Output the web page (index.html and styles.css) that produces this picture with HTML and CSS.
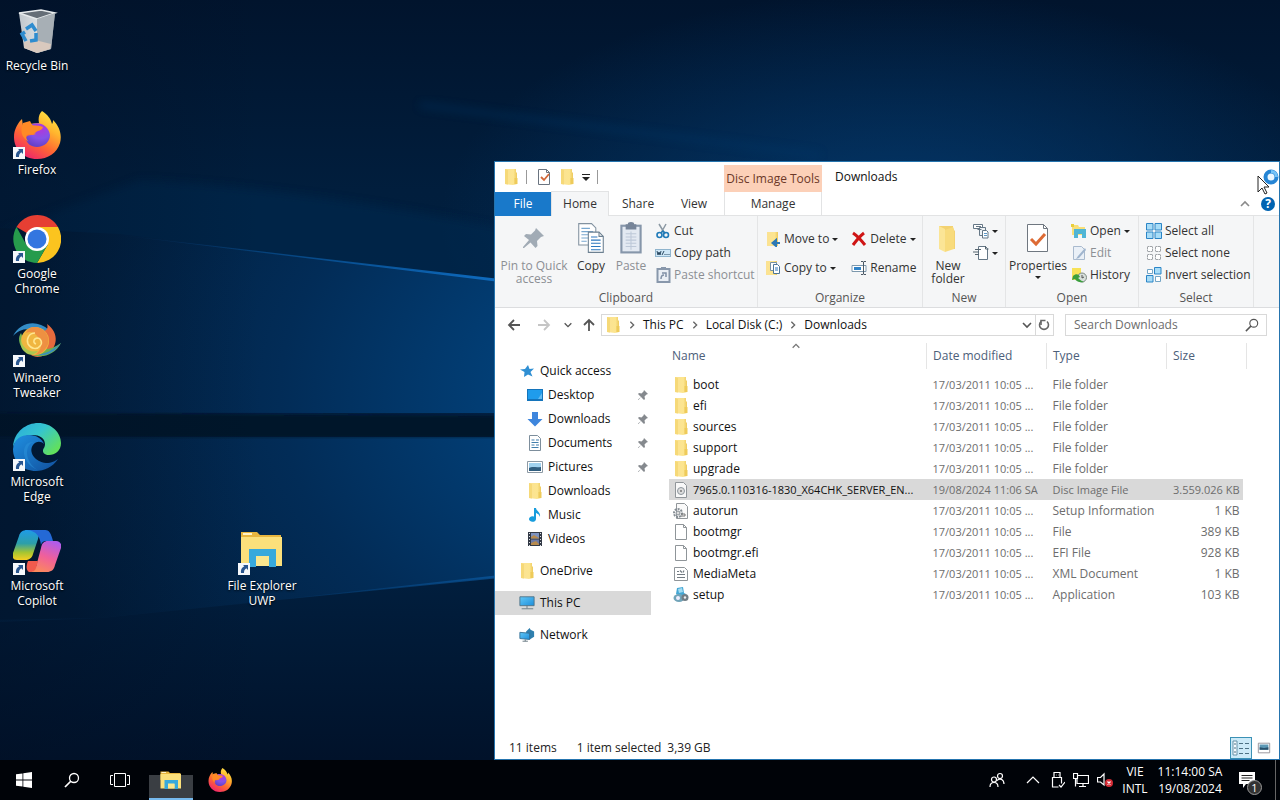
FILE: index.html
```html
<!DOCTYPE html>
<html lang="en">
<head>
<meta charset="utf-8">
<meta name="viewport" content="width=device-width, initial-scale=1">
<title>Downloads</title>
<link rel="stylesheet" href="styles.css">
</head>
<body>
<svg class="defs" aria-hidden="true">
  <defs>
    <linearGradient id="gFolder" x1="0" y1="0" x2="1" y2="0"><stop offset="0" stop-color="#fbe293"/><stop offset=".7" stop-color="#fce58f"/><stop offset="1" stop-color="#edc95c"/></linearGradient>
    <linearGradient id="gFox" x1=".9" y1="0" x2=".3" y2="1"><stop offset="0" stop-color="#fff04a"/><stop offset=".35" stop-color="#ffb52e"/><stop offset=".65" stop-color="#ff6a32"/><stop offset="1" stop-color="#f0246b"/></linearGradient>
    <radialGradient id="gFoxIn" cx=".6" cy=".2" r=".9"><stop offset="0" stop-color="#b833d8"/><stop offset=".5" stop-color="#8552e8"/><stop offset="1" stop-color="#5b3cc0"/></radialGradient>
    <linearGradient id="gEdge" x1="0" y1="0" x2="1" y2=".7"><stop offset="0" stop-color="#2aa8dc"/><stop offset=".5" stop-color="#35c5cf"/><stop offset="1" stop-color="#62e05c"/></linearGradient>
    <linearGradient id="gEdge2" x1="0" y1="0" x2="1" y2="1"><stop offset="0" stop-color="#1f8fe0"/><stop offset="1" stop-color="#114f9c"/></linearGradient>
    <linearGradient id="gCop1" x1="0" y1="0" x2="0" y2="1"><stop offset="0" stop-color="#1f9be8"/><stop offset=".45" stop-color="#2d9fa8"/><stop offset=".75" stop-color="#a6c531"/><stop offset="1" stop-color="#f6ce22"/></linearGradient>
    <linearGradient id="gCop2" x1=".7" y1="0" x2=".3" y2="1"><stop offset="0" stop-color="#b05ceb"/><stop offset=".5" stop-color="#f0609a"/><stop offset="1" stop-color="#fb8a5b"/></linearGradient>
    <linearGradient id="gBin" x1="0" y1="0" x2="1" y2="0"><stop offset="0" stop-color="#bfc6cc"/><stop offset=".5" stop-color="#d9dde0"/><stop offset="1" stop-color="#8f979e"/></linearGradient>
    <linearGradient id="gScreen" x1="0" y1="0" x2="1" y2="1"><stop offset="0" stop-color="#62c8f7"/><stop offset="1" stop-color="#1d8edb"/></linearGradient>
  </defs>

  <symbol id="folder" viewBox="0 0 16 16"><path d="M2 0h11v3l1 1v11l-4 1-8-1z" fill="url(#gFolder)"/><path d="M2 0l3 1v14.500L2 15z" fill="#f6d978"/><path d="M11.500 9h3v6h-3z" fill="#eecb5a"/></symbol>
  <symbol id="bigfolder" viewBox="0 0 24 32"><path d="M3 4h14v3l2 2v18H3z" fill="#f3d271"/><path d="M3 4l6 3v23l-6-3z" fill="#fbe596"/><path d="M9 8l8-3 1 2v20l-9 3z" fill="#f8db7c"/></symbol>
  <symbol id="tick" viewBox="0 0 16 16"><path d="M2.500.500h8l3 3v12h-11z" fill="#fff" stroke="#6a7480"/><path d="M10.500.500v3h3" fill="none" stroke="#6a7480"/><path d="M5 8l3 3 5-6" fill="none" stroke="#d2683a" stroke-width="1.800"/></symbol>
  <symbol id="bigtick" viewBox="0 0 24 32"><path d="M1.500 2.500h16l4 4v23h-20z" fill="#fff" stroke="#6f7780"/><path d="M17.500 2.500v4h4" fill="none" stroke="#6f7780"/><path d="M5 17l5 5 9-10" fill="none" stroke="#dd6b35" stroke-width="3"/></symbol>
  <symbol id="bigpin" viewBox="0 0 24 24"><path d="M14 2l8 8-3 1-4 4 .500 5-2 2-5-5.500L2 22l-1 0v-1l6-7-5-4 2-2 5 .500 4-4z" fill="#a1abb5"/></symbol>
  <symbol id="pin" viewBox="0 0 12 12"><path d="M7 1l4 4-1.500.500-2 2 .500 2.500-1 1-3-3-2.500 3L1 10.500l3-2.500-3-3L2 4l2.500.500 2-2z" fill="#85898e"/></symbol>
  <symbol id="copy" viewBox="0 0 26 30"><path d="M1.500 1.500h12l4 4v16h-16z" fill="#fff" stroke="#8292a0"/><path d="M4 6h8M4 9h11M4 12h11M4 15h11M4 18h5" stroke="#78a7cf"/><path d="M10.500 9.500h10l4 4v15h-14z" fill="#fff" stroke="#6c8091"/><path d="M20.500 9.500v4h4" fill="none" stroke="#6c8091"/><path d="M13 14h6M13 17h9M13 20h9M13 23h9M13 26h9" stroke="#2d77bd"/></symbol>
  <symbol id="paste" viewBox="0 0 24 30"><rect x="3" y="3.500" width="18" height="25" fill="#e3e9f2" stroke="#8696aa" stroke-width="2"/><path d="M7 2h2a3 2 0 0 1 6 0h2v5H7z" fill="#778599"/><path d="M7 11h10M7 14h10M7 17h10M7 20h10M7 23h10M12 9v17" stroke="#bdc8d8"/></symbol>
  <symbol id="cut" viewBox="0 0 16 16"><path d="M4 1l6 10M11 1L6 10" stroke="#8b98a3" stroke-width="1.500"/><circle cx="4.500" cy="12" r="2.500" fill="none" stroke="#1f7ab8" stroke-width="1.600"/><circle cx="11" cy="12" r="2.500" fill="none" stroke="#1f7ab8" stroke-width="1.600"/><path d="M6 10l2-2 2 2" fill="none" stroke="#1f7ab8" stroke-width="1.500"/></symbol>
  <symbol id="path" viewBox="0 0 16 16"><rect x=".500" y="4.500" width="15" height="7" fill="#cfe7f7" stroke="#8fb4cd"/><path d="M2 6l1 4 1-3 1 3 1-4M7 10l2-4M9.500 9.500h1M11.500 9.500h1M13.500 9.500h1" fill="none" stroke="#29475f"/></symbol>
  <symbol id="shortcutpaste" viewBox="0 0 16 16"><rect x="2.500" y="2" width="12" height="13" fill="#e9eef5" stroke="#8897ab" stroke-width="2"/><path d="M6 0h5v3H6z" fill="#8897ab"/><path d="M6 12c0-3 1-4 3-4M7 6h4v4" fill="none" stroke="#7f8fa5" stroke-width="1.500"/></symbol>
  <symbol id="moveto" viewBox="0 0 16 16"><path d="M2 1h11v14H2z" fill="url(#gFolder)"/><path d="M15 12H9M11 9l-3.500 3 3.500 3z" fill="#2c78b5" stroke="#2c78b5" stroke-width="2"/></symbol>
  <symbol id="copyto" viewBox="0 0 16 16"><path d="M1 1h11v14H1z" fill="url(#gFolder)"/><path d="M5.500 2.500h6v8h-6z" fill="#fff" stroke="#7590a5"/><path d="M8.500 4.500h4l2 2v7h-6z" fill="#fff" stroke="#4c7598"/><path d="M10 8h3M10 10h3" stroke="#2d77bd"/></symbol>
  <symbol id="delete" viewBox="0 0 16 16"><path d="M2 2c3 2 8 7 12 12M13 2C9 5 5 10 2 14" fill="none" stroke="#cf1515" stroke-width="3"/></symbol>
  <symbol id="rename" viewBox="0 0 16 16"><path d="M1 5.500h14v6H1z" fill="#fff" stroke="#7c98ad"/><path d="M3 7h7v3H3z" fill="#2f83c8"/><path d="M10 1.500h2l.500 1 .500-1h2M12.500 2v12M10 14.500h2l.500-1 .500 1h2" fill="none" stroke="#4b5965"/></symbol>
  <symbol id="newitem" viewBox="0 0 16 16"><path d="M.500 1.500h9v4h-9zM3 3.500h5" fill="#fff" stroke="#657786"/><path d="M4.500 6.500h4M6.500 4.500h6v8h-6z" fill="#eef2f5" stroke="#657786"/><path d="M9.500 7.500h4l1.500 1.500v6H9.500z" fill="#fff" stroke="#657786"/><path d="M11 10.500h3M11 12.500h3" stroke="#5d97c5"/></symbol>
  <symbol id="easy" viewBox="0 0 16 16"><path d="M5.500 1.500h7l2 2v11h-9z" fill="#fff" stroke="#657786"/><path d="M12.500 1v3h3M2 4.500h6M0 7h6M2 9.500h4" fill="none" stroke="#55646f"/></symbol>
  <symbol id="open" viewBox="0 0 16 16"><path d="M1 2h6l1 2h6v8H1z" fill="#f8df78"/><path d="M3 6h12v9h-4v-4H7v4H3z" fill="#50b5d5"/><path d="M0 1h3v3H0zM4 1h3M1 6v6" fill="#e9cf3c"/></symbol>
  <symbol id="edit" viewBox="0 0 16 16"><path d="M2.500 1.500h8l3 3v10h-11z" fill="#eaf0f7" stroke="#a9bace"/><path d="M14 3l-7 8-2 3 3-1 7-8z" fill="#a0b5ce"/></symbol>
  <symbol id="history" viewBox="0 0 16 16"><path d="M1 1h9v12H1z" fill="#f7e258"/><circle cx="11" cy="10.500" r="4.500" fill="#d8e0dc" stroke="#7c8982"/><path d="M11 8v3l2-1" fill="none" stroke="#555"/><path d="M2 9c3-3 6-2 7 1l-2 1c2 2 4 3 6 4-5 1-8-1-9-3l-3 1z" fill="#3b9f3d"/></symbol>
  <symbol id="selall" viewBox="0 0 16 16"><path d="M.500.500h6.500v6.500H.500zM9 .500h6.500v6.500H9zM.500 9h6.500v6.500H.500zM9 9h6.500v6.500H9z" fill="#a7dcf7" stroke="#2b85c6"/></symbol>
  <symbol id="selnone" viewBox="0 0 16 16"><path d="M1.500 1.500h5v5h-5zM9.500 1.500h5v5h-5zM1.500 9.500h5v5h-5zM9.500 9.500h5v5h-5z" fill="#fff" stroke="#a0a4a8" stroke-dasharray="2 .500"/></symbol>
  <symbol id="selinv" viewBox="0 0 16 16"><path d="M8.500.500h6.500v6.500H8.500zM.500 8.500h6.500v6.500H.500z" fill="#a7dcf7" stroke="#2b85c6"/><path d="M1.500 2.500h5v4h-5zM9.500 9.500h5v5h-5z" fill="#fff" stroke="#72a5c6"/></symbol>
  <symbol id="star" viewBox="0 0 16 16"><path d="M9 2l1.500 4 4.500-.500-3.500 3.500 2 4.500-4.500-2-4 2.500.500-5L1 6.500l5-.500z" fill="#2f8fd3"/></symbol>
  <symbol id="desk" viewBox="0 0 16 16"><path d="M0 2h16v12H0z" fill="#1474bb"/><path d="M1 3h14v9H1z" fill="#1f9cec"/><path d="M11 12l4-6v6z" fill="#65bcf2"/></symbol>
  <symbol id="down" viewBox="0 0 16 16"><path d="M5 1h6v7h4.500L8 15.500.500 8H5z" fill="#3e86dd"/></symbol>
  <symbol id="doc" viewBox="0 0 16 16"><path d="M2.500.500h8l3 3v12h-11z" fill="#fff" stroke="#7d8e9c"/><path d="M4.500 5h3M9 5h3M4.500 7.500h7M4.500 10h3M9 10h3M4.500 12.500h7" stroke="#427fac"/></symbol>
  <symbol id="pic" viewBox="0 0 16 16"><path d="M.500 2.500h15v11H.500z" fill="#fff" stroke="#8d9aa5"/><path d="M2 4h12v8H2z" fill="#a1d2ef"/><path d="M2 9c4-2 6 0 12-1v4H2z" fill="#315e7f"/></symbol>
  <symbol id="music" viewBox="0 0 16 16"><path d="M7 1h2c0 3 5 4 4 9-1-3-2-3-4-4v6a3.500 2.800 0 1 1-2-2.500z" fill="#189ddd"/></symbol>
  <symbol id="video" viewBox="0 0 16 16"><path d="M1 1h14v14H1z" fill="#333a46"/><path d="M4 2h8v5.500H4z" fill="#7e93bf"/><path d="M4 8.500h8V14H4z" fill="#6d7aa5"/><path d="M4 6l3-2 5 3v.500H4zM4 12l5-2 3 3v1H4z" fill="#b88b4e"/><path d="M2.500 2v13M13.500 2v13" stroke="#dce0e6" stroke-dasharray="1 2"/></symbol>
  <symbol id="pc" viewBox="0 0 18 16"><path d="M1 1h16v10H1z" fill="url(#gScreen)" stroke="#4e7185"/><path d="M9 11v3M3 14.500h13" stroke="#62757f"/></symbol>
  <symbol id="net" viewBox="0 0 18 16"><path d="M8 4l4-4 1 2 4 2v6l-5 3-4-2z" fill="#2f7fae"/><path d="M1 5l11 1v7l-11-1z" fill="url(#gScreen)" stroke="#326e93"/><path d="M7 13v2M4 15h6" stroke="#60727c"/></symbol>
  <symbol id="disc" viewBox="0 0 16 16"><path d="M2.500.500h8l3 3v12h-11z" fill="#f8f8f8" stroke="#91969a"/><circle cx="8" cy="9" r="3.500" fill="#ddd" stroke="#8e979e"/><circle cx="8" cy="9" r="1" fill="#777"/></symbol>
  <symbol id="inf" viewBox="0 0 16 16"><path d="M3.500.500h8l3 3v12h-11z" fill="#fafafa" stroke="#91969a"/><circle cx="5" cy="10" r="4" fill="none" stroke="#858d94" stroke-width="2" stroke-dasharray="2 1"/><circle cx="5" cy="10" r="2" fill="#ddd" stroke="#858d94"/><path d="M8 11h4v2H8" fill="none" stroke="#777"/></symbol>
  <symbol id="file" viewBox="0 0 16 16"><path d="M2.500.500h8l3 3v12h-11z" fill="#fff" stroke="#8f9599"/><path d="M10.500.500v3h3" fill="none" stroke="#8f9599"/></symbol>
  <symbol id="xml" viewBox="0 0 16 16"><path d="M1.500 1.500h10l3 3v10h-13z" fill="#fff" stroke="#8f9599"/><path d="M4 5.500h2M7 4.500l2 2M11 4.500l-1 2M4 8.500h8M4 11.500h8" stroke="#727b82" stroke-width="1.200"/></symbol>
  <symbol id="setup" viewBox="0 0 16 16"><path d="M4 1l6-1 1 6 2 1-4 3-6-3z" fill="#43a7d5"/><path d="M5 2l4-1 1 4-4 1z" fill="#a5dcf2"/><ellipse cx="6" cy="11" rx="5.500" ry="4" fill="#71a4b9"/><circle cx="5" cy="11" r="2" fill="#eef"/><circle cx="12" cy="10.500" r="3.500" fill="#727e86"/><circle cx="12" cy="10.500" r="1.200" fill="#eee"/></symbol>
  <symbol id="back" viewBox="0 0 16 16"><path d="M14 8H3M8 3L3 8l5 5" fill="none" stroke="currentColor" stroke-width="1.800"/></symbol>
  <symbol id="chev" viewBox="0 0 12 12"><path d="M2 4l4 4 4-4" fill="none" stroke="currentColor" stroke-width="1.600"/></symbol>
  <symbol id="search" viewBox="0 0 16 16"><circle cx="10" cy="6" r="4.500" fill="none" stroke="currentColor" stroke-width="1.300"/><path d="M7 9L1 15" stroke="currentColor" stroke-width="1.700"/></symbol>
  <symbol id="refresh" viewBox="0 0 16 16"><path d="M5 4.500a4.500 4.500 0 1 0 6 0" fill="none" stroke="#666" stroke-width="1.600"/><path d="M5 8V3.500H9.500" fill="none" stroke="#666" stroke-width="1.600"/></symbol>
  <symbol id="shortcut" viewBox="0 0 12 12"><path d="M0 0h12v12H0z" fill="#f5f8fb"/><path d="M5 2h5v5L8.300 5.300C6.500 6.500 6 8 6 10H3c-.500-3 .500-5 3.300-6.700z" fill="#29568f"/></symbol>

  <symbol id="firefox" viewBox="0 0 48 48"><path d="M29 0c6 4 9 8 10 13 1-1 1-3 1-4 7 7 9 15 7 23-3 10-12 16-23 16C10 48 1 38 1 26c0-7 3-12 6-16l2-2 1 7c2-2 4-2 6-2 3 0 6-1 10-1-1-5 0-9 3-12z" fill="url(#gFox)"/><path d="M19 13c8-3 17 2 18 11 0 7-6 12-13 12-6 0-11-4-11-9 1-4 6-2 10-4l-5-2z" fill="url(#gFoxIn)"/><path d="M10 12l7-2 2 4c3 1 7 0 11 2-1 4-5 3-8 6-2 2-6 1-8 2-2 2 0 5 2 7-8-5-9-11-6-19z" fill="#ff8a26"/></symbol>
  <symbol id="chrome" viewBox="0 0 48 48"><path d="M24 24L3.500 12A24 24 0 0 1 45 12z" fill="#e63f33"/><path d="M24 12h21a24 24 0 0 1-21 36l10.500-18z" fill="#fbc41f"/><path d="M3.500 12A24 24 0 0 0 24 48l10.500-18H13.500z" fill="#269b4c"/><circle cx="24" cy="24" r="12" fill="#fff"/><circle cx="24" cy="24" r="9.500" fill="#3376e0"/></symbol>
  <symbol id="winaero" viewBox="0 0 48 48"><path d="M0 17C7 3 24 0 36 11c4 4 4 8 2 12-7-10-14-14-22-13C8 10 4 13 0 17z" fill="#348cc5"/><path d="M34 5c13 9 11 25-2 31-6 3-11 2-14 0 12-3 16-13 9-25 5 2 9 0 7-6z" fill="#e66a3d"/><path d="M48 24c-7 14-25 18-37 7-6-6-6-13-3-17 3 9 11 15 20 16 8 1 14-2 20-6z" fill="#6caf50"/><path d="M48 24c-6 9-14 13-23 12 9-2 15-5 23-12z" fill="#398dc0"/><circle cx="22" cy="22" r="14" fill="#f0b640"/><path d="M21 8c10 0 16 8 14 17-2 6-7 10-13 11 7-5 8-13 3-18-4-5-8-6-12-4 2-4 4-6 8-6z" fill="#ee9042"/><path d="M8 20c1 9 8 14 17 12-3 4-9 5-13 1-4-3-5-8-4-13z" fill="#a9c752"/><path d="M22 14c-6 0-9 6-7 11 3 5 9 6 12 2 3-3 1-8-3-8-4 1-4 5-1 6" fill="none" stroke="#ffe690" stroke-width="1.500"/></symbol>
  <symbol id="edge" viewBox="0 0 48 48"><path d="M0 24C1 8 14 0 25 0c14 0 23 10 23 20 0 8-6 12-12 12-4 0-6-2-6-4 0-3 2-3 2-7 0-6-6-9-12-9C9 12 2 17 0 24z" fill="url(#gEdge)"/><path d="M0 26c1-10 8-14 16-14 8 0 13 4 15 9-3-3-8-3-11 1-5 7 2 17 13 18 6 0 9-2 12-4-5 8-14 12-22 12C10 48 0 39 0 26z" fill="url(#gEdge2)"/><path d="M18 20c-8 7-3 22 7 27C12 42 8 29 13 22c2-3 6-3 8-3z" fill="#2b94dc" opacity=".5"/></symbol>
  <symbol id="copilot" viewBox="0 0 48 48"><path d="M14 3h20c-6 1-8 4-9 9l-5 15c-1 4-4 6-8 6H4c-4 0-5-3-4-7L6 9c1-4 4-6 8-6z" fill="url(#gCop1)"/><path d="M14 3h18c4 0 6 3 8 11h-6c-4 0-5 1-6 4-1-8-4-14-14-15z" fill="#2469d6"/><path d="M35 14h8c4 0 6 3 5 7l-6 17c-1 5-4 7-8 7H16c5-1 7-4 8-9l4-15c1-5 3-7 7-7z" fill="url(#gCop2)"/><path d="M15 34h10l-2 7c-1 3-3 4-7 4-3-2-3-6-1-11z" fill="#f15b4d"/></symbol>
  <symbol id="bin" viewBox="0 0 48 48"><path d="M6 6l22-3 14 3-4 36-14 4-13-5z" fill="url(#gBin)"/><path d="M6 6l22-3 14 3-18 6z" fill="#656e77" stroke="#e6eaec" stroke-width="1.500"/><path d="M24 12l18-6-4 36-14 4z" fill="#a7afb5"/><path d="M11 35l11-2 16 4-1 5-13 4-13-5z" fill="#d9c9be"/><path d="M13 22l6-4 4 6M23 26l0 7-6 1M13 34l-4-7 3-2" fill="none" stroke="#2e8ccf" stroke-width="3.500"/></symbol>
  <symbol id="explorer" viewBox="0 0 48 40"><path d="M3 1h16l3 3h21v14H3z" fill="#e8b63f"/><path d="M5 2h9v2H5z" fill="#fff3c7"/><path d="M3 6h41v29H3z" fill="#fbe07b"/><path d="M11 18h27v18h-7V26H18v10h-7z" fill="#37a9dc"/><path d="M18 25h13v10H18z" fill="#fae68e"/></symbol>
</svg>

<main class="desktop">
  <svg class="wallpaper" viewBox="0 0 1280 760" preserveAspectRatio="none" aria-hidden="true">
    <defs>
      <radialGradient id="wGlow" gradientUnits="userSpaceOnUse" cx="700" cy="390" r="700" gradientTransform="translate(0 120) scale(1 .7)"><stop offset="0" stop-color="#05529a"/><stop offset=".3" stop-color="#023e75"/><stop offset=".6" stop-color="#022c57"/><stop offset="1" stop-color="#011c39"/></radialGradient>
      <linearGradient id="wTop" x1="0" y1="0" x2="0" y2="1"><stop offset="0" stop-color="#01142d"/><stop offset=".25" stop-color="#011e3d"/><stop offset="1" stop-color="#022447"/></linearGradient>
      <radialGradient id="wRight" gradientUnits="userSpaceOnUse" cx="900" cy="220" r="460" gradientTransform="translate(0 110) scale(1 .5)"><stop offset="0" stop-color="#053f78" stop-opacity=".75"/><stop offset="1" stop-color="#04427d" stop-opacity="0"/></radialGradient>
      <linearGradient id="wBottom" x1="0" y1="0" x2="0" y2="1"><stop offset="0" stop-color="#012142"/><stop offset="1" stop-color="#01122a"/></linearGradient>
      <linearGradient id="wRay" x1="0" x2="1"><stop offset="0" stop-color="#0965b8" stop-opacity="0"/><stop offset="1" stop-color="#0f6cc0"/></linearGradient>
      <linearGradient id="wLeft" x1="0" x2="1"><stop offset="0" stop-color="#010f24" stop-opacity=".4"/><stop offset="1" stop-color="#010f24" stop-opacity="0"/></linearGradient>
      <filter id="soft" x="-20%" y="-20%" width="140%" height="140%"><feGaussianBlur stdDeviation="4"/></filter>
      <filter id="edgeSoft" x="-5%" y="-20%" width="110%" height="140%"><feGaussianBlur stdDeviation="1"/></filter>
    </defs>
    <rect width="1280" height="760" fill="url(#wTop)"/>
    <rect width="1280" height="340" fill="url(#wRight)"/>
    <path d="M140 180Q330 190 560 240V300L0 232z" fill="#022a51" opacity=".5" filter="url(#soft)"/>
    <path d="M0 228L120 234L500 281L900 340V413H0z" fill="url(#wGlow)"/>
    <path d="M110 234L500 279V282z" fill="url(#wRay)"/>
    <path d="M420 105L820 155" stroke="#06396b" stroke-width="6" opacity=".35" filter="url(#soft)"/>
    <path d="M-20 437H900V540L500 577L100 618L-20 620z" fill="url(#wGlow)"/>
    <path d="M-20 413L520 416V437H-20z" fill="#011329" filter="url(#edgeSoft)"/>
    <path d="M0 622L100 618L500 578L900 540V760H0z" fill="url(#wBottom)"/>
    <path d="M240 604L500 575V578z" fill="url(#wRay)" opacity=".5"/>
    <rect width="260" height="760" fill="url(#wLeft)"/>
  </svg>

  <nav class="shortcuts" aria-label="Desktop">
    <a class="shortcut" href="#bin"><span class="shortcut-pic"><svg><use href="#bin"/></svg></span>Recycle Bin</a>
    <a class="shortcut" href="#firefox"><span class="shortcut-pic"><svg><use href="#firefox"/></svg><svg class="badge"><use href="#shortcut"/></svg></span>Firefox</a>
    <a class="shortcut" href="#chrome"><span class="shortcut-pic"><svg><use href="#chrome"/></svg><svg class="badge"><use href="#shortcut"/></svg></span>Google<br>Chrome</a>
    <a class="shortcut" href="#winaero"><span class="shortcut-pic"><svg><use href="#winaero"/></svg><svg class="badge"><use href="#shortcut"/></svg></span>Winaero<br>Tweaker</a>
    <a class="shortcut" href="#edge"><span class="shortcut-pic"><svg><use href="#edge"/></svg><svg class="badge"><use href="#shortcut"/></svg></span>Microsoft<br>Edge</a>
    <a class="shortcut" href="#copilot"><span class="shortcut-pic"><svg><use href="#copilot"/></svg><svg class="badge"><use href="#shortcut"/></svg></span>Microsoft<br>Copilot</a>
  </nav>
  <a class="shortcut shortcut-uwp" href="#explorer"><span class="shortcut-pic"><svg><use href="#explorer"/></svg><svg class="badge"><use href="#shortcut"/></svg></span>File Explorer<br>UWP</a>

  <section class="window" aria-label="Downloads">
    <header class="head">
      <div class="quick">
        <svg class="i16"><use href="#folder"/></svg><i class="bar"></i>
        <button aria-label="Properties"><svg class="i16"><use href="#tick"/></svg></button>
        <button aria-label="New folder"><svg class="i16"><use href="#folder"/></svg></button>
        <button aria-label="Customize toolbar" class="custom"><i class="dash"></i><i class="caret"></i></button><i class="bar"></i>
      </div>
      <div class="context">Disc Image Tools</div>
      <h1 class="title">Downloads</h1>
      <div class="tabs">
        <button class="tab tab-file">File</button><button class="tab tab-home">Home</button><button class="tab">Share</button><button class="tab">View</button>
      </div>
      <button class="manage">Manage</button>
      <div class="head-tools"><button aria-label="Collapse ribbon"><svg class="i12 flip"><use href="#chev"/></svg></button><button class="help" aria-label="Help">?</button></div>
    </header>

    <div class="ribbon">
      <section class="group g-clip">
        <div class="tools">
          <button class="big off wide"><svg class="pinpic"><use href="#bigpin"/></svg>Pin to Quick<br>access</button>
          <button class="big"><svg><use href="#copy"/></svg>Copy</button>
          <button class="big off"><svg><use href="#paste"/></svg>Paste</button>
          <div class="stack">
            <button class="small"><svg class="i16"><use href="#cut"/></svg>Cut</button>
            <button class="small"><svg class="i16"><use href="#path"/></svg>Copy path</button>
            <button class="small off"><svg class="i16"><use href="#shortcutpaste"/></svg>Paste shortcut</button>
          </div>
        </div>
        <h2>Clipboard</h2>
      </section>
      <section class="group g-org">
        <div class="tools">
          <div class="stack roomy">
            <button class="small"><svg class="i16"><use href="#moveto"/></svg>Move to<i class="caret"></i></button>
            <button class="small"><svg class="i16"><use href="#copyto"/></svg>Copy to<i class="caret"></i></button>
          </div>
          <div class="stack roomy">
            <button class="small"><svg class="i16"><use href="#delete"/></svg>Delete<i class="caret"></i></button>
            <button class="small"><svg class="i16"><use href="#rename"/></svg>Rename</button>
          </div>
        </div>
        <h2>Organize</h2>
      </section>
      <section class="group g-new">
        <div class="tools">
          <button class="big"><svg><use href="#bigfolder"/></svg>New<br>folder</button>
          <div class="stack">
            <button class="small" aria-label="New item"><svg class="i16"><use href="#newitem"/></svg><i class="caret"></i></button>
            <button class="small" aria-label="Easy access"><svg class="i16"><use href="#easy"/></svg><i class="caret"></i></button>
          </div>
        </div>
        <h2>New</h2>
      </section>
      <section class="group g-open">
        <div class="tools">
          <button class="big"><svg><use href="#bigtick"/></svg>Properties<i class="caret"></i></button>
          <div class="stack">
            <button class="small"><svg class="i16"><use href="#open"/></svg>Open<i class="caret"></i></button>
            <button class="small off"><svg class="i16"><use href="#edit"/></svg>Edit</button>
            <button class="small"><svg class="i16"><use href="#history"/></svg>History</button>
          </div>
        </div>
        <h2>Open</h2>
      </section>
      <section class="group g-select">
        <div class="tools">
          <div class="stack">
            <button class="small"><svg class="i16"><use href="#selall"/></svg>Select all</button>
            <button class="small"><svg class="i16"><use href="#selnone"/></svg>Select none</button>
            <button class="small"><svg class="i16"><use href="#selinv"/></svg>Invert selection</button>
          </div>
        </div>
        <h2>Select</h2>
      </section>
    </div>

    <div class="address-row">
      <div class="arrows">
        <button aria-label="Back"><svg class="i16"><use href="#back"/></svg></button>
        <button aria-label="Forward" class="faint"><svg class="i16 turn"><use href="#back"/></svg></button>
        <button aria-label="Recent"><svg class="i10"><use href="#chev"/></svg></button>
        <button aria-label="Up"><svg class="i16 up"><use href="#back"/></svg></button>
      </div>
      <div class="address">
        <svg class="i16"><use href="#folder"/></svg>
        <svg class="i10 sep"><use href="#chev"/></svg><a href="#pc">This PC</a>
        <svg class="i10 sep"><use href="#chev"/></svg><a href="#c">Local Disk (C:)</a>
        <svg class="i10 sep"><use href="#chev"/></svg><a href="#downloads">Downloads</a>
        <button aria-label="History" class="drop"><svg class="i12"><use href="#chev"/></svg></button>
        <button aria-label="Refresh" class="reload"><svg class="i16"><use href="#refresh"/></svg></button>
      </div>
      <div class="search"><input type="search" placeholder="Search Downloads" aria-label="Search Downloads"><svg class="i14"><use href="#search"/></svg></div>
    </div>

    <div class="content">
      <nav class="tree" aria-label="Folders">
        <a class="top" href="#q"><svg class="i16"><use href="#star"/></svg>Quick access</a>
        <a href="#d"><svg class="i16"><use href="#desk"/></svg>Desktop<svg class="pin"><use href="#pin"/></svg></a>
        <a href="#d"><svg class="i16"><use href="#down"/></svg>Downloads<svg class="pin"><use href="#pin"/></svg></a>
        <a href="#d"><svg class="i16"><use href="#doc"/></svg>Documents<svg class="pin"><use href="#pin"/></svg></a>
        <a href="#d"><svg class="i16"><use href="#pic"/></svg>Pictures<svg class="pin"><use href="#pin"/></svg></a>
        <a href="#d"><svg class="i16"><use href="#folder"/></svg>Downloads</a>
        <a href="#d"><svg class="i16"><use href="#music"/></svg>Music</a>
        <a href="#d"><svg class="i16"><use href="#video"/></svg>Videos</a>
        <a class="top apart" href="#o"><svg class="i16"><use href="#folder"/></svg>OneDrive</a>
        <a class="top apart current" href="#p"><svg class="i16"><use href="#pc"/></svg>This PC</a>
        <a class="top apart" href="#n"><svg class="i16"><use href="#net"/></svg>Network</a>
      </nav>
      <div class="files">
        <svg class="i10 flip sort"><use href="#chev"/></svg>
        <table>
          <colgroup><col class="c-name"><col class="c-date"><col class="c-type"><col class="c-size"></colgroup>
          <thead><tr><th>Name</th><th>Date modified</th><th>Type</th><th>Size</th></tr></thead>
          <tbody>
            <tr><td><svg class="i16"><use href="#folder"/></svg>boot</td><td>17/03/2011 10:05 ...</td><td>File folder</td><td></td></tr>
            <tr><td><svg class="i16"><use href="#folder"/></svg>efi</td><td>17/03/2011 10:05 ...</td><td>File folder</td><td></td></tr>
            <tr><td><svg class="i16"><use href="#folder"/></svg>sources</td><td>17/03/2011 10:05 ...</td><td>File folder</td><td></td></tr>
            <tr><td><svg class="i16"><use href="#folder"/></svg>support</td><td>17/03/2011 10:05 ...</td><td>File folder</td><td></td></tr>
            <tr><td><svg class="i16"><use href="#folder"/></svg>upgrade</td><td>17/03/2011 10:05 ...</td><td>File folder</td><td></td></tr>
            <tr class="picked"><td><svg class="i16"><use href="#disc"/></svg>7965.0.110316-1830_X64CHK_SERVER_EN...</td><td>19/08/2024 11:06 SA</td><td>Disc Image File</td><td>3.559.026 KB</td></tr>
            <tr><td><svg class="i16"><use href="#inf"/></svg>autorun</td><td>17/03/2011 10:05 ...</td><td>Setup Information</td><td>1 KB</td></tr>
            <tr><td><svg class="i16"><use href="#file"/></svg>bootmgr</td><td>17/03/2011 10:05 ...</td><td>File</td><td>389 KB</td></tr>
            <tr><td><svg class="i16"><use href="#file"/></svg>bootmgr.efi</td><td>17/03/2011 10:05 ...</td><td>EFI File</td><td>928 KB</td></tr>
            <tr><td><svg class="i16"><use href="#xml"/></svg>MediaMeta</td><td>17/03/2011 10:05 ...</td><td>XML Document</td><td>1 KB</td></tr>
            <tr><td><svg class="i16"><use href="#setup"/></svg>setup</td><td>17/03/2011 10:05 ...</td><td>Application</td><td>103 KB</td></tr>
          </tbody>
        </table>
      </div>
    </div>

    <footer class="status">
      <span>11 items</span><span class="sel">1 item selected</span><span>3,39 GB</span>
      <div class="views">
        <button class="view on" aria-label="Details"><svg viewBox="0 0 18 16"><path d="M1 1h4v14H1z" fill="#f4fbff" stroke="#6691a7"/><path d="M2 4h2M2 8h2M2 12h2M7 3.500h4M13 3.500h4M7 8.500h4M13 8.500h4M7 13.500h4M13 13.500h4" stroke="#4c7184"/></svg></button>
        <button class="view" aria-label="Thumbnails"><svg viewBox="0 0 16 16"><path d="M1.500 2.500h13v11h-13z" fill="#fff" stroke="#8f8b93"/><path d="M3 4h10v6H3z" fill="#5c98b5"/><path d="M3 7l5 1 5-1v3H3z" fill="#28506b"/></svg></button>
      </div>
    </footer>
  </section>

  <svg class="pointer" viewBox="0 0 22 28" aria-hidden="true"><circle cx="14" cy="9" r="5.500" fill="#e9f6ff" stroke="#2585d5" stroke-width="4"/><path d="M14 3.500a5.500 5.500 0 0 1 5.500 5.500" fill="none" stroke="#75c3f7" stroke-width="3"/><path d="M1 8v16l4-4 3 6 2-1-3-6h5z" fill="#fff" stroke="#222"/></svg>
</main>

<footer class="taskbar">
  <button class="task" aria-label="Start"><svg viewBox="0 0 16 16"><path d="M0 2.300L6.500 1.400v6.100H0zM7.300 1.300L16 0v7.500H7.300zM0 8.400h6.500v6.200L0 13.700zM7.300 8.400H16V16l-8.700-1.300z" fill="#fff"/></svg></button>
  <button class="task" aria-label="Search"><svg><use href="#search"/></svg></button>
  <button class="task" aria-label="Task view"><svg class="wide20" viewBox="0 0 20 16"><path d="M4.500 1.500h11v13h-11zM3 3.500H.500v9H3M17 3.500h2.500v9H17" fill="none" stroke="#fff"/></svg></button>
  <button class="task active" aria-label="File Explorer"><svg><use href="#explorer"/></svg></button>
  <button class="task fox" aria-label="Firefox"><svg><use href="#firefox"/></svg></button>
  <div class="tray">
    <button class="tray-btn people" aria-label="People"><svg viewBox="0 0 16 16"><circle cx="11" cy="4" r="2.500"/><circle cx="5" cy="7.500" r="2.500"/><path d="M1 15c0-6 8-6 8 0M8 8.500c3-3 7-1 7 3.500"/></svg></button>
    <button class="tray-btn" aria-label="Hidden icons"><svg class="flip" viewBox="0 0 16 16"><path d="M2 5l6 6 6-6"/></svg></button>
    <button class="tray-btn" aria-label="USB"><svg viewBox="0 0 16 16"><path d="M5 5V.500h6V5M3.500 5.500h9v6M3.500 5v10h6M7 3h0.500M9 3h.500M10 13l2 2 4-5"/></svg></button>
    <button class="tray-btn" aria-label="Network"><svg viewBox="0 0 16 16"><path d="M5 3.500h10.500v8H4V7M.500 1.500h4v5h-4zM2.500 7v7.500M10 12v2.500M6 14.500h7"/></svg></button>
    <button class="tray-btn" aria-label="Sound muted"><svg viewBox="0 0 16 16"><path d="M.500 5.500h3L7 2v11L3.500 10h-3z"/><circle cx="12" cy="11" r="4" class="red"/><path d="M10.500 9.500l3 3M13.500 9.500l-3 3"/></svg></button>
    <button class="lang">VIE<br>INTL</button>
    <button class="clock">11:14:00 SA<br>19/08/2024</button>
    <button class="notes" aria-label="Notifications"><svg viewBox="0 0 16 16"><path d="M0 0h16v12H7l-3 4v-4H0z" fill="#fff"/><path d="M2.500 3.500h11M2.500 6h11M2.500 8.500h8" stroke="#222"/></svg><span class="count">1</span></button>
    <button class="peek" aria-label="Show desktop"></button>
  </div>
</footer>
</body>
</html>
```
FILE: styles.css
```css
* { box-sizing: border-box; }
html, body { height: 100%; margin: 0; }
body {
  display: flex;
  flex-direction: column;
  overflow: hidden;
  font: 12px/16px "Open Sans", "Noto Sans", sans-serif;
  color: #111;
  background: #01132a;
}
a { color: inherit; text-decoration: none; }
button { font: inherit; color: inherit; background: none; border: 0; padding: 0; margin: 0; }
h1, h2 { margin: 0; font: inherit; }
svg { display: block; flex: none; }
.defs { position: absolute; width: 0; height: 0; }
.i16 { width: 16px; height: 16px; }
.i14 { width: 14px; height: 14px; }
.i12 { width: 12px; height: 12px; }
.i10 { width: 10px; height: 10px; }
.flip { transform: rotate(180deg); }
.turn { transform: rotate(180deg); }
.up { transform: rotate(90deg); }
.caret { border: 3px solid transparent; border-top-color: #222; border-bottom: 0; flex: none; }

/* Desktop */
.desktop { position: relative; flex: 1; min-height: 0; }
.wallpaper { position: absolute; inset: 0; width: 100%; height: 100%; }
.shortcuts { position: relative; display: inline-grid; grid-auto-rows: 104px; width: 74px; padding-top: 7px; }
.shortcut { display: flex; flex-direction: column; align-items: center; text-align: center; line-height: 15px; color: #fff; text-shadow: 0 1px 2px #000; white-space: nowrap; }
.shortcut-pic { position: relative; margin-bottom: 3px; }
.shortcut-pic svg { width: 48px; height: 48px; }
.shortcut-pic .badge { position: absolute; left: 0; bottom: 0; width: 12px; height: 12px; }
.shortcut-uwp { position: absolute; left: 225px; top: 527px; width: 74px; }

/* Explorer window */
.window {
  position: absolute; left: 494px; top: 161px; right: 0; bottom: 0;
  display: flex; flex-direction: column;
  background: #fff; border: 1px solid #2574ae;
}
.head { display: grid; grid-template: 30px 24px / 229px 98px 1fr; }
.quick { display: flex; align-items: center; gap: 7px; padding-left: 8px; }
.bar { width: 1px; height: 14px; background: #999; margin: 0 2px 0 0; }
.custom { display: flex; flex-direction: column; align-items: center; gap: 2px; width: 8px; }
.dash { width: 8px; height: 1px; background: #222; }
.custom .caret { border-width: 4px 4px 0; }
.context { margin-top: 3px; background: #fcd0b8; color: #6c3828; text-align: center; line-height: 28px; white-space: nowrap; }
.title { padding-left: 13px; line-height: 30px; }
.tabs { display: flex; border-bottom: 1px solid #e2e3e4; }
.tab { width: 58px; height: 24px; color: #333; }
.tab:last-child { width: 54px; }
.tab-file { width: 56px; background: #1979ca; color: #fff; }
.tab-home { background: #f5f6f7; border: 1px solid #e2e3e4; border-width: 0 1px; box-shadow: 0 -1px #e2e3e4; }
.manage { color: #333; border: 1px solid #e2e3e4; border-top: 0; }
.head-tools { display: flex; align-items: center; justify-content: flex-end; gap: 10px; padding-right: 4px; border-bottom: 1px solid #e2e3e4; color: #8a8a8a; }
.help { width: 14px; height: 14px; border-radius: 50%; background: #0063b1; color: #fff; font-weight: bold; line-height: 14px; }

/* Ribbon */
.ribbon { display: flex; height: 92px; background: #f5f6f7; border-bottom: 1px solid #dcdddf; color: #333; }
.group { display: flex; flex-direction: column; border-right: 1px solid #e4e5e6; }
.group h2 { margin-top: auto; padding-bottom: 1px; text-align: center; color: #555; }
.g-clip { width: 263px; }
.g-org { width: 165px; }
.g-new { width: 83px; }
.g-open { width: 133px; }
.g-select { width: 115px; }
.tools { display: flex; white-space: nowrap; }
.g-clip .tools { padding-left: 2px; }
.big { display: flex; flex-direction: column; align-items: center; width: 40px; padding-top: 6px; line-height: 13px; }
.big svg { width: 28px; height: 32px; margin-bottom: 5px; }
.big .pinpic { width: 24px; }
.big.wide { width: 74px; }
.big .caret { margin-top: 4px; }
.g-new .big { width: 50px; }
.g-open .big { width: 64px; }
.off { color: #8c8f94; }
.stack { display: flex; flex-direction: column; align-items: flex-start; padding: 4px 0 0 4px; }
.small { display: flex; align-items: center; gap: 3px; height: 22px; }
.g-select .stack { padding-left: 7px; }
.g-open .stack { padding-left: 1px; }
.g-new .stack { padding-left: 0; }
.stack.roomy { gap: 7px; padding: 12px 0 0 7px; }
.stack.roomy + .roomy { padding-left: 13px; }

/* Address row */
.address-row { display: flex; align-items: center; height: 33px; padding: 0 12px 0 11px; color: #555; }
.arrows { display: flex; align-items: center; gap: 9px; width: 95px; }
.faint { color: #c5c5c5; }
.arrows button:nth-child(2) { margin-left: 5px; }
.arrows button:nth-child(3) { margin-left: 2px; }
.arrows button:nth-child(4) { margin-left: -1px; }
.address { display: flex; flex: 1; align-items: center; gap: 6px; height: 22px; padding-left: 3px; border: 1px solid #d9d9d9; color: #111; white-space: nowrap; }
.sep { transform: rotate(-90deg); color: #666; }
.drop { margin-left: auto; color: #555; }
.address .reload { width: 18px; height: 20px; margin-left: -4px; border-left: 1px solid #d9d9d9; }
.search { display: flex; align-items: center; width: 202px; height: 22px; margin-left: 11px; padding: 0 7px 0 8px; border: 1px solid #d9d9d9; }
.search input { flex: 1; min-width: 0; padding: 0; border: 0; outline: 0; background: none; font: inherit; color: #333; }
.search input::placeholder { color: #6d6d6d; opacity: 1; }

/* Content */
.content { display: flex; flex: 1; min-height: 0; }
.tree { width: 156px; padding-top: 18px; }
.tree a { display: flex; align-items: center; gap: 5px; height: 24px; padding: 0 2px 0 32px; }
.tree .top { padding-left: 24px; }
.tree .apart { margin-top: 8px; }
.tree .current { background: #d9d9d9; }
.pin { width: 12px; height: 12px; margin-left: auto; }
.files { position: relative; flex: 1; padding: 2px 32px 0 18px; }
.sort { position: absolute; left: 140px; top: 0; color: #777; }
table { width: 100%; border-collapse: collapse; table-layout: fixed; color: #6d6d6d; }
.c-date, .c-type { width: 120px; }
.c-size { width: 80px; }
th { height: 26px; padding: 0 0 0 6px; text-align: left; font-weight: normal; color: #4c607a; border-right: 1px solid #e5e5e5; }
th:first-child { padding-left: 3px; }
thead::after { content: ""; display: block; height: 5px; }
td { height: 21px; padding: 0 0 0 6px; white-space: nowrap; }
td:first-child { display: flex; align-items: center; gap: 4px; padding-left: 4px; color: #111; }
td:last-child { padding: 0 7px 0 0; text-align: right; }
td:nth-child(2), .picked td { font-size: 11px; }
.picked { background: #d9d9d9; }
.picked td:last-child { box-shadow: inset -4px 0 #fff; }

/* Status bar */
.status { display: flex; align-items: center; height: 22px; padding: 0 7px 0 14px; color: #222; }
.sel { margin: 0 6px 0 20px; }
.views { display: flex; align-items: center; gap: 4px; margin-left: auto; }
.view { display: grid; place-items: center; width: 16px; height: 22px; }
.view svg { width: 14px; height: 16px; }
.view.on { width: 22px; background: #cceaf8; border: 1px solid #3b91b5; }
.view.on svg { width: 18px; }

.pointer { position: absolute; right: 1px; top: 168px; width: 22px; height: 28px; }

/* Taskbar */
.taskbar { display: flex; height: 40px; background: #000308; color: #fff; }
.task { display: grid; place-items: center; width: 48px; height: 40px; }
.task svg { width: 16px; height: 16px; }
.task .wide20 { width: 20px; }
.task.active { align-self: flex-end; width: 44px; height: 25px; margin: 0 3px 0 5px; background: #3a3e43; border-bottom: 2px solid #76b9ed; }
.task.active svg { width: 24px; height: 22px; margin-top: -12px; }
.task.fox svg { width: 24px; height: 24px; }
.tray { display: flex; align-items: center; margin-left: auto; }
.tray-btn { display: grid; place-items: center; width: 24px; height: 40px; }
.tray-btn svg { width: 16px; height: 16px; fill: none; stroke: #fff; stroke-width: 1.2; }
.tray-btn .red { fill: #d52b35; stroke: none; }
.people { margin-right: 12px; }
.lang { width: 36px; line-height: 17px; }
.clock { width: 74px; line-height: 17px; white-space: nowrap; }
.notes { position: relative; display: grid; place-items: center; width: 48px; height: 40px; padding-right: 8px; }
.notes svg { width: 16px; height: 16px; }
.count { position: absolute; left: 20px; top: 20px; width: 15px; height: 15px; border: 1px solid #999; border-radius: 50%; background: #333; font-size: 11px; line-height: 13px; }
.peek { width: 5px; height: 40px; border-left: 1px solid #666; }
```
